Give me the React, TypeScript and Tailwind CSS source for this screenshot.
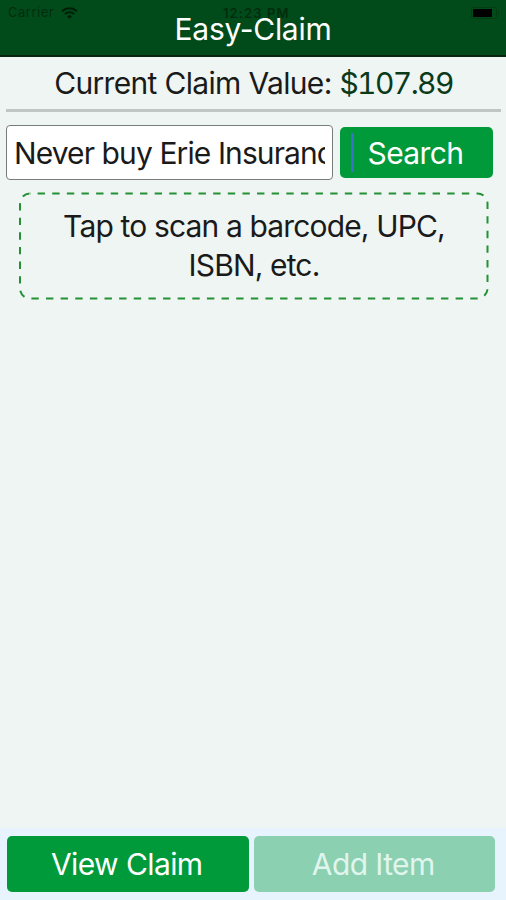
import { useState } from "react";

interface ActionButtonProps {
  label: string;
  disabled?: boolean;
}

function StatusBar() {
  return (
    <div className="absolute inset-x-0 top-0 flex h-[26px] items-center justify-between pl-2 pr-[6px] text-[13px] text-[#012d0d]">
      <div className="flex items-center gap-[7px]">
        <span className="font-normal tracking-[0.5px]">Carrier</span>
        <svg width="17" height="12" viewBox="0 0 17 12" fill="none" stroke="#001f08" strokeWidth="2">
          <path d="M1 4.3C5.2 0.2 11.8 0.2 16 4.3" />
          <path d="M3.8 7.1C6.4 4.6 10.6 4.6 13.2 7.1" />
          <path d="M8.5 11.8L5.9 9.2C7.4 7.9 9.6 7.9 11.1 9.2Z" fill="#001f08" stroke="none" />
        </svg>
      </div>
      <svg width="29" height="12" viewBox="0 0 29 12">
        <rect x="0.5" y="0.5" width="25" height="11" rx="2" fill="none" stroke="#013d13" />
        <rect x="2" y="2" width="19" height="8" fill="#000000" />
        <path d="M27.5 4V8" stroke="#013d13" />
      </svg>
      <span className="absolute left-[223px] top-[4px] text-[13px] font-semibold leading-[19px] tracking-[1.1px]">
        12:23 PM
      </span>
    </div>
  );
}

function ActionButton({ label, disabled = false }: ActionButtonProps) {
  return (
    <button
      disabled={disabled}
      className={`h-[56px] flex-1 rounded-[5px] pr-[2px] text-[30px] leading-[57px] tracking-[-0.6px] ${
        disabled ? "bg-[#8bd0b1] text-[#e0f5ee]" : "bg-[#009a3b] text-white"
      }`}
    >
      {label}
    </button>
  );
}

export default function App() {
  const [query, setQuery] = useState("Never buy Erie Insurance");

  return (
    <div className="flex h-[900px] w-[506px] flex-col overflow-hidden bg-[#eef5f2] font-['Inter',sans-serif] font-normal text-[#1a1a1a]">
      <header className="relative h-[57px] shrink-0 border-b-2 border-[#082510] bg-[#014b1b]">
        <StatusBar />
        <h1 className="relative pt-[9px] text-center text-[30px] leading-[40px] tracking-[-0.3px] text-white">
          Easy-Claim
        </h1>
      </header>

      <main className="flex-1">
        {/* Running total */}
        <div className="ml-[6px] mr-[5px] h-[55px] border-b-[3px] border-[#c0c6c3] text-center text-[30px] leading-[52px] tracking-[-0.67px]">
          Current Claim Value:{" "}
          <span className="tabular-nums tracking-[-1.6px] text-[#0b3a1b]">$107.89</span>
        </div>

        {/* Search row */}
        <div className="flex items-center gap-[7px] pl-[6px] pt-[13px]">
          <input
            value={query}
            onChange={(e) => setQuery(e.target.value)}
            className="h-[55px] w-[327px] rounded-[4px] border border-[#777d7a] bg-white px-[7px] text-[30px] tracking-[-0.9px] outline-none"
          />
          <button className="relative h-[51px] w-[153px] rounded-[5px] bg-[#009a3b] pr-[2px] text-[30px] leading-[52px] tracking-[-0.6px] text-white">
            <span className="absolute left-[11px] top-[6px] h-[39px] w-[3px] bg-[#3a72c4]" />
            Search
          </button>
        </div>

        {/* Scan area */}
        <button className="relative ml-[19px] mt-[12px] block h-[108px] w-[470px] px-8 text-center text-[30px] leading-[39px] tracking-[-0.85px]">
          <svg className="absolute inset-0" width="470" height="108" viewBox="0 0 470 108" fill="none">
            <rect
              x="1"
              y="1.5"
              width="467.5"
              height="105"
              rx="10"
              stroke="#259035"
              strokeWidth="2"
              strokeDasharray="7.4 7.23"
              strokeDashoffset="-7.6"
            />
          </svg>
          Tap to scan a barcode, UPC, ISBN, etc.
        </button>
      </main>

      <footer className="flex h-[72px] shrink-0 gap-[5px] bg-[#e7f4fd] pl-[7px] pr-[11px] pt-2">
        <ActionButton label="View Claim" />
        <ActionButton label="Add Item" disabled />
      </footer>
    </div>
  );
}
